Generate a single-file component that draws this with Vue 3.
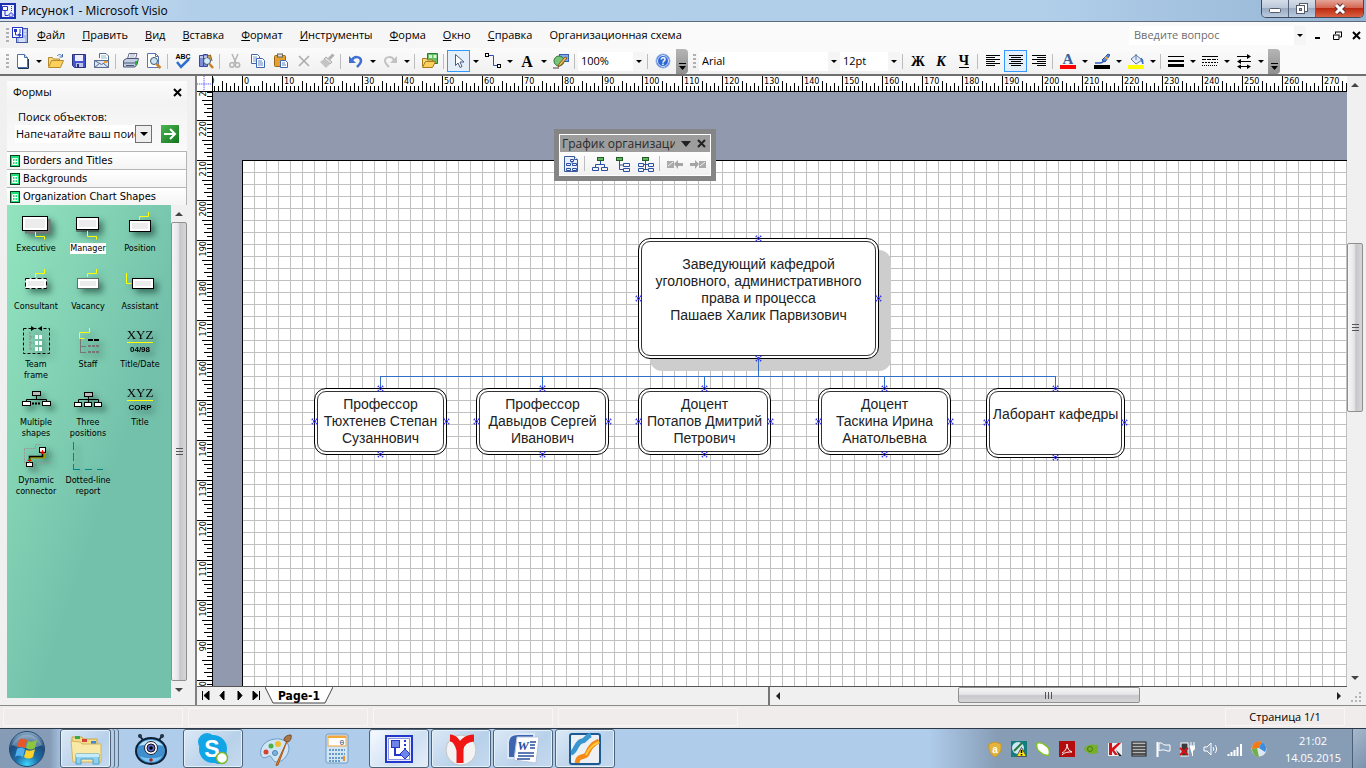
<template>
  <div class="app">
    <header class="titlebar">
      <svg class="ico16" viewBox="0 0 16 16" v-html="icons.visio"></svg>
      <h1 class="title">Рисунок1 - Microsoft Visio</h1>
      <div class="win-buttons">
        <button class="win" aria-label="Свернуть"><svg width="14" height="10" viewBox="0 0 14 10"><rect x="1.500" y="4.500" width="11" height="4" rx="1" fill="#fff" stroke="#555a6b" /></svg></button>
        <button class="win" aria-label="Восстановить"><svg width="14" height="13" viewBox="0 0 14 13"><rect x="4.500" y="1.500" width="8" height="8" fill="#fff" stroke="#555a6b" /><rect x="1.500" y="3.500" width="8" height="8" fill="#fff" stroke="#555a6b" /><rect x="4.500" y="6.500" width="2" height="2" fill="#9bb" stroke="#555a6b" /></svg></button>
        <button class="win close" aria-label="Закрыть"><svg width="14" height="12" viewBox="0 0 14 12"><path d="M3 2l8 8M11 2l-8 8" stroke="#59303a" stroke-width="5" /><path d="M3 2l8 8M11 2l-8 8" stroke="#fff" stroke-width="3" /></svg></button>
      </div>
    </header>

    <nav class="menubar">
      <span class="grip"></span>
      <svg class="doc-icon" viewBox="0 0 18 18" v-html="icons.docVisio"></svg>
      <a v-for="m in menus" :key="m" href="#" class="menu"><u v-if="m !== menus[menus.length - 1]">{{ m[0] }}</u><template v-else>{{ m[0] }}</template>{{ m.slice(1) }}</a>
      <div class="ask">
        <input type="text" aria-label="Введите вопрос" placeholder="Введите вопрос" />
        <button class="drop" aria-label="Список вопросов"><i class="tri"></i></button>
      </div>
      <button class="mdi" aria-label="Свернуть документ"><svg width="9" height="9"><path d="M1 7h5" stroke="#000" stroke-width="2" /></svg></button>
      <button class="mdi" aria-label="Восстановить документ"><svg width="9" height="9"><path d="M2 1h7M2.500 1v2M8.500 1v5H6.500M0 4h6.500M.5 4v4.500h5.500V4" stroke="#000" fill="none" /></svg></button>
      <button class="mdi" aria-label="Закрыть документ"><svg width="9" height="9"><path d="M1 1l7 7M8 1L1 8" stroke="#000" stroke-width="2" /></svg></button>
    </nav>

    <div class="toolbars">
      <div v-for="(bar, b) in toolbars" :key="b" class="toolbar">
        <span class="grip"></span>
        <template v-for="(t, i) in bar" :key="i">
          <span v-if="t === '|'" class="sep"></span>
          <button v-else-if="t === 'v'" class="arrow" aria-label="Ещё"><i class="tri"></i></button>
          <div v-else-if="t.select" class="combo" :class="t.cls">
            <select :aria-label="t.label"><option>{{ t.select }}</option></select>
            <span class="drop"><i class="tri"></i></span>
          </div>
          <button v-else class="tool" :class="{ on: t[0] === '*' }" :aria-label="t.replace('*', '')">
            <svg class="ico16" viewBox="0 0 16 16" v-html="icons[t.replace('*', '')]"></svg>
          </button>
        </template>
        <button class="overflow" aria-label="Параметры панели"><svg width="9" height="9"><path d="M1 1.500h7" stroke="#000" /><path d="M1 4h7L4.500 8z" /></svg></button>
      </div>
    </div>

    <main class="work">
      <aside class="shapes">
        <div class="pane-head">
          <span>Формы</span>
          <button aria-label="Закрыть панель"><svg width="9" height="9"><path d="M1 1l7 7M8 1L1 8" stroke="#000" stroke-width="2" /></svg></button>
        </div>
        <div class="search">
          <label for="find">Поиск объектов:</label>
          <div class="find-row">
            <input id="find" type="text" value="Напечатайте ваш поиск" />
            <button class="find-drop" aria-label="Список"><i class="tri big"></i></button>
            <button class="go" aria-label="Найти"><svg width="14" height="14"><path d="M1 7h11M7 2l5 5-5 5" fill="none" stroke="#fff" stroke-width="2" /></svg></button>
          </div>
        </div>
        <button v-for="s in stencils" :key="s" class="stencil">
          <svg width="11" height="12" viewBox="0 0 11 12"><rect x=".5" y=".5" width="9" height="11" fill="#1fe07a" stroke="#06401c" /><path d="M2.500 3.500h5v6h-5zM5 4v5M3 6.500h4" fill="none" stroke="#fff" /></svg>
          {{ s }}
        </button>
        <div class="stencil-body">
          <div class="masters">
            <div v-for="m in masters" :key="m.name" class="master" :class="{ sel: m.name === 'Manager' }">
              <svg width="52" height="33" viewBox="0 0 52 33" v-html="m.art"></svg>
              <span>{{ m.name }}</span>
            </div>
          </div>
          <div class="vscroll side">
            <button aria-label="Вверх"><i class="sa up"></i></button>
            <div class="thumb"><i></i></div>
            <button aria-label="Вниз"><i class="sa down"></i></button>
          </div>
        </div>
      </aside>

      <section class="drawing">
        <div class="draw-grid">
          <svg class="corner" viewBox="0 0 16 16"><path d="M7.500 0v16M0 8.500h16" stroke="#22f" stroke-dasharray="1 1" /></svg>
          <svg class="ruler-h">
            <path :d="hTicks" stroke="#000" />
            <text v-for="n in hCount" :key="n" :x="(n - 1) * 40 - 9" y="8">{{ Math.abs(n - 2) * 10 }}</text>
          </svg>
          <svg class="ruler-v">
            <path :d="vTicks" stroke="#000" />
            <text v-for="n in vCount" :key="n" text-anchor="end" :transform="`translate(9 ${(n - 1) * 40 - 11}) rotate(-90)`">{{ Math.abs(24 - n) * 10 }}</text>
          </svg>
          <div class="canvas">
            <div class="page">
              <svg class="links"><path :d="links" /></svg>
              <div
                v-for="n in nodes"
                :key="n.x + '-' + n.y"
                class="node"
                :class="{ boss: n.boss }"
                :style="{ left: n.x + 'px', top: n.y + 'px', width: n.w + 'px', height: n.h + 'px' }"
              >
                <span v-for="(l, i) in n.lines" :key="i">{{ l }}</span>
                <svg v-for="s in ['t', 'r', 'b', 'l']" :key="s" class="pin" :class="s" viewBox="0 0 7 7"><path d="M1 1l5 5M6 1L1 6" /></svg>
              </div>
            </div>
            <div class="float">
              <div class="float-head">
                <span>График организации</span>
                <button aria-label="Меню панели"><svg width="10" height="6"><path d="M0 0h10L5 6z" fill="#222" /></svg></button>
                <button aria-label="Закрыть"><svg width="9" height="9"><path d="M1 1l7 7M8 1L1 8" stroke="#222" stroke-width="2" /></svg></button>
              </div>
              <div class="float-body">
                <template v-for="(t, i) in floatTools" :key="i">
                  <span v-if="t === '|'" class="sep"></span>
                  <button v-else class="tool" :aria-label="t"><svg class="ico16" viewBox="0 0 16 16" v-html="icons[t]"></svg></button>
                </template>
              </div>
            </div>
          </div>
        </div>
        <div class="vscroll main">
          <button aria-label="Вверх"><i class="sa up"></i></button>
          <div class="sp before"></div>
          <div class="thumb"><i></i></div>
          <div class="sp after"></div>
          <button aria-label="Вниз"><i class="sa down"></i></button>
        </div>
        <div class="bottom">
          <div class="pages">
            <button v-for="(p, i) in navs" :key="i" class="nav" :aria-label="'Страница ' + i"><svg width="9" height="9"><path :d="p" stroke="#000" /></svg></button>
            <button class="tab">
              <svg width="68" height="17"><path d="M0 0l8 16h52l8-16" fill="#fff" stroke="#444" /></svg>
              <b>Page-1</b>
            </button>
          </div>
          <div class="hscroll">
            <button aria-label="Влево"><i class="sa left"></i></button>
            <div class="sp before"></div>
            <div class="thumb"><i></i></div>
            <div class="sp after"></div>
            <button aria-label="Вправо"><i class="sa right"></i></button>
          </div>
        </div>
        <svg class="resize" viewBox="0 0 17 18"><path d="M12 6h2M12 10h2M8 10h2M12 14h2M8 14h2M4 14h2" stroke="#b5b5b5" stroke-width="2" /></svg>
      </section>
    </main>

    <footer class="status">
      <span v-for="n in 4" :key="n" class="cell"></span>
      <span class="cell last">Страница 1/1</span>
    </footer>

    <div class="taskbar">
      <button class="start" aria-label="Пуск"><svg width="38" height="38" viewBox="0 0 38 38" v-html="icons.start"></svg></button>
      <button v-for="t in tasks" :key="t.icon" class="task" :class="t.cls" :aria-label="t.icon">
        <svg width="34" height="34" viewBox="0 0 34 34" v-html="icons[t.icon]"></svg>
      </button>
      <div class="tray">
        <svg v-for="t in tray" :key="t" class="ico16" viewBox="0 0 16 16" v-html="icons[t]"></svg>
        <time class="clock"><span>21:02</span><span>14.05.2015</span></time>
        <button class="peek" aria-label="Показать рабочий стол"></button>
      </div>
    </div>
  </div>
</template>

<script setup>
import { onMounted, onUnmounted, ref } from 'vue'

const menus = ['Файл', 'Править', 'Вид', 'Вставка', 'Формат', 'Инструменты', 'Форма', 'Окно', 'Справка', 'Организационная схема']
const stencils = ['Borders and Titles', 'Backgrounds', 'Organization Chart Shapes']

const toolbars = [
  [
    'new', 'v', 'open', 'save', 'mail', '|', 'print', 'preview', '|', 'spell', 'research', '|',
    'cut', 'copy', 'paste', 'delete', 'brush', '|', 'undo', 'v', 'redo', 'v', '|', 'stencils', '|',
    '*pointer', 'v', 'connector', 'v', 'text', 'v', 'draw', '|',
    { select: '100%', label: 'Масштаб', cls: 'zoom' }, '|', 'help'
  ],
  [
    { select: 'Arial', label: 'Шрифт', cls: 'font' }, { select: '12pt', label: 'Размер шрифта', cls: 'size' }, '|',
    'bold', 'italic', 'underline', '|', 'left', '*center', 'right', '|',
    'color', 'v', 'line', 'v', 'fill', 'v', '|', 'weight', 'v', 'pattern', 'v', 'ends', 'v'
  ]
]
const floatTools = ['layout', '|', 'horiz', 'vert', 'side', '|', 'moveLeft', 'moveRight']

const navs = [
  'M1.500 0v9M8 0L3 4.500 8 9z',
  'M6 0L2 4.500 6 9z',
  'M3 0l4 4.500L3 9z',
  'M7.500 0v9M1 0l5 4.500L1 9z'
]

const tasks = [
  { icon: 'explorer', cls: 'open stack' },
  { icon: 'cyclops', cls: 'plain' },
  { icon: 'skype', cls: 'open' },
  { icon: 'paint', cls: 'plain' },
  { icon: 'calc', cls: 'plain' },
  { icon: 'visioBig', cls: 'open active' },
  { icon: 'yandex', cls: 'open' },
  { icon: 'word', cls: 'open' },
  { icon: 'foxit', cls: 'open' }
]
const tray = ['shield', 'disc', 'leaf', 'adobe', 'nvidia', 'kaspersky', 'chip', 'flag', 'power', 'sound', 'signal', 'globe']

/* ---------- rulers ---------- */
function tick(i) {
  if (i % 10 === 0) return 16
  if (i % 10 === 5) return 10
  if (i % 10 < 5) return 5
  return i % 2 ? 5 : 8
}
let hTicks = ''
let vTicks = ''
for (let i = 0; i < 600; i++) {
  const p = i * 4 - 10.5
  hTicks += `M${p} 15v-${tick(i)}`
  vTicks += `M15 ${p - 1}h-${tick(i)}`
}

// only as many labels as the window has room for
const hCount = ref(0)
const vCount = ref(0)
function fitRulers() {
  hCount.value = Math.ceil((window.innerWidth - 242) / 40)
  vCount.value = Math.ceil((window.innerHeight - 152) / 40)
}
fitRulers()
onMounted(() => window.addEventListener('resize', fitRulers))
onUnmounted(() => window.removeEventListener('resize', fitRulers))

/* ---------- diagram ---------- */
const nodes = [
  { boss: true, x: 395, y: 77, w: 241, h: 121, lines: ['Заведующий кафедрой', 'уголовного, административного', 'права и процесса', 'Пашаев Халик Парвизович', ''] },
  { x: 71, y: 227, w: 133, h: 67, lines: ['Профессор', 'Тюхтенев Степан', 'Сузаннович'] },
  { x: 233, y: 227, w: 133, h: 67, lines: ['Профессор', 'Давыдов Сергей', 'Иванович'] },
  { x: 395, y: 227, w: 133, h: 67, lines: ['Доцент', 'Потапов Дмитрий', 'Петрович'] },
  { x: 575, y: 227, w: 133, h: 67, lines: ['Доцент', 'Таскина Ирина', 'Анатольевна'] },
  { x: 743, y: 227, w: 139, h: 70, lines: ['Лаборант кафедры', ''] }
]
const links = 'M515.500 197v18M137 215.500h676' + [137, 299, 461, 641, 812].map((x) => `M${x + 0.5} 215v12`).join('')

/* ---------- stencil masters ---------- */
const box = (x, y, w, h, extra = '') => `<rect x="${x + 0.5}" y="${y + 0.5}" width="${w}" height="${h}" fill="#fff" stroke="#000" ${extra}/><rect x="${x + 3}" y="${y + 3}" width="${w - 5}" height="${h - 5}" fill="#ececec"/>`
const yel = (d) => `<path d="${d}" fill="none" stroke="#ff0"/>`
const small = (x, y, f = '#fff') => `<rect x="${x + 0.5}" y="${y + 0.5}" width="8" height="4" fill="${f}" stroke="#000"/>`
const xyz = (sub) => `<text x="26" y="13" text-anchor="middle" font-family="Liberation Serif, serif" font-size="13">XYZ</text><path d="M13 16.500h26" stroke="#ff0"/><text x="26" y="26" text-anchor="middle" font-family="Liberation Sans, sans-serif" font-weight="bold" font-size="8">${sub}</text>`
const masters = [
  { name: 'Executive', art: '<path d="M15 22h24V9" fill="none" stroke="#777" stroke-width="3"/>' + box(12, 6, 25, 14) + yel('M25.500 22v4.500h9v3') },
  { name: 'Manager', art: '<path d="M14 21h23" stroke="#333"/>' + box(14, 7, 22, 12) + yel('M25.500 21v5.500h9v3') },
  { name: 'Position', art: box(15, 10, 21, 11) + yel('M25.500 10V6.500h9V2') },
  { name: 'Consultant', art: box(15, 10, 21, 10, 'stroke-dasharray="4 2"') + yel('M25.500 9V5.500h9V1') },
  { name: 'Vacancy', art: box(15, 10, 21, 10, 'stroke-dasharray="1 1"') + yel('M25.500 9V5.500h9V1') },
  { name: 'Assistant', art: box(18, 10, 21, 10) + yel('M12.500 5v10.500h5') },
  { name: 'Team\nframe', art: '<rect x="13.500" y="2.500" width="26" height="25" fill="none" stroke="#000" stroke-dasharray="3 2"/><path d="M21 0v5l4-2.500zM32 0v5l-4-2.500z"/><path d="M20 6v17M20 11h4M20 17h4M20 23h4" fill="none" stroke="#888" stroke-dasharray="2 1"/><path d="M25 11h7M25 17h7M25 23h7" stroke="#fff" stroke-width="4" stroke-dasharray="3 1"/>' },
  { name: 'Staff', art: '<path d="M18.500 13v14M18 20.500h6M18 26.500h6" fill="none" stroke="#777"/><path d="M26 20h12M26 26h12" stroke="#777" stroke-width="2" stroke-dasharray="3 1"/><path d="M26 14h12" stroke="#000" stroke-width="2" stroke-dasharray="5 1"/>' + yel('M27.500 2v4.500h-10v6h5') },
  { name: 'Title/Date', art: xyz('04/98') },
  { name: 'Multiple\nshapes', art: '<path d="M26.500 12v4M16.500 19v-3.500h20V19" fill="none" stroke="#000"/><path d="M22 19.500h9" stroke="#000" stroke-width="2" stroke-dasharray="2 1"/>' + small(22, 7, '#bbb') + small(12, 17) + small(32, 17) },
  { name: 'Three\npositions', art: '<path d="M26.500 12v6M16.500 19v-3.500h20V19" fill="none" stroke="#000"/>' + small(22, 8, '#bbb') + '<rect x="12.500" y="18.500" width="7" height="4" fill="#fff" stroke="#000"/><rect x="22.500" y="18.500" width="7" height="4" fill="#fff" stroke="#000"/><rect x="32.500" y="18.500" width="7" height="4" fill="#fff" stroke="#000"/>' },
  { name: 'Title', art: xyz('CORP') },
  { name: 'Dynamic\nconnector', art: '<path d="M14.500 6.500h11v-4h6M39.500 6v15h-12v6h-7M14.500 7v14" fill="none" stroke="#999" stroke-dasharray="2 1"/><path d="M20 20v-4.500h14V10" fill="none" stroke="#990" stroke-width="2"/><path d="M19.500 18v-3.500h13V10" fill="none" stroke="#000" stroke-width="1.500"/><rect x="29.500" y="5.500" width="6" height="5" fill="#fff" stroke="#000"/><rect x="16.500" y="20.500" width="6" height="4" fill="#fff" stroke="#000"/><path d="M32.500 8v4M30.500 10h4M19.500 16v5M17.500 18.500h4" stroke="red"/>' },
  { name: 'Dotted-line\nreport', art: '<path d="M11.500 0v28" stroke="#088" stroke-dasharray="8 3"/><path d="M11 27.500h30" stroke="#088" stroke-dasharray="7 5"/>' }
]

/* ---------- icons ---------- */
const vbox = '<path d="M2.500 3.500h5v4h-5z" fill="#fff" stroke="#2338c8"/><path d="M5 8v4.500h3" fill="none" stroke="#2338c8"/><path d="M11 9.500l2.500 2.500-2.500 2.500L8.500 12z" fill="#cfd8ff" stroke="#2338c8"/><path d="M11.500 3v5" stroke="#2338c8" stroke-dasharray="1 1"/>'
const tree = (d) => `<path d="${d}" fill="none" stroke="#2c4fa3"/>`
const al = (rows) => rows.map(([x, w], i) => `<path d="M${x} ${2.5 + i * 2}h${w}" stroke="#000"/>`).join('')
const letter = (c, extra = '') => `<text x="8" y="13" text-anchor="middle" font-family="Liberation Serif, serif" font-weight="bold" font-size="14" ${extra}>${c}</text>`

const icons = {
  visio: '<rect x="1" y="1" width="14" height="14" fill="#eef1ff" stroke="#1c2fae" stroke-width="2"/>' + vbox,
  docVisio: '<rect x="5.500" y="2.500" width="11" height="14" fill="#a9bce8" stroke="#3f55a5"/><path d="M8 13h6M8 15h6M13 5h2M13 8h2" stroke="#fff"/><rect x="1.500" y="1.500" width="10" height="10" fill="#fff" stroke="#2338c8"/><path d="M3 3h3v3H3z" fill="#2338c8"/><path d="M4.500 6v3H7M9 3v4" fill="none" stroke="#2338c8"/><path d="M8.500 7l2 2-2 2-2-2z" fill="#2338c8"/>',
  new: '<path d="M3.500 1.500h7l3 3v10h-10z" fill="#fff" stroke="#4a6fb0"/><path d="M10.500 1.500v3h3" fill="#d5e0f5" stroke="#4a6fb0"/><path d="M4 15.500h10.500V6" fill="none" stroke="#24344f"/>',
  open: '<path d="M.5 13.500v-9h4l1 1.500h6v2" fill="#f8d980" stroke="#b68a2a"/><path d="M.5 14.500l3-7h12l-3 7z" fill="#fbd05c" stroke="#b68a2a"/><path d="M9 3c2-2 4-2 5 .5M14.500 1v3h-3" fill="none" stroke="#456fb0"/>',
  save: '<path d="M1.500 1.500h13v13h-11l-2-2z" fill="#4455d0" stroke="#28337f"/><rect x="4" y="2" width="8" height="6" fill="#eef"/><rect x="5" y="10" width="7" height="4" fill="#bcc4e8"/><rect x="6" y="11" width="2" height="3" fill="#28337f"/>',
  mail: '<path d="M5.500 5V.5H12l2.500 2.500V9" fill="#fff" stroke="#5a6a90"/><path d="M7 3h5M7 5h6" stroke="#8bc"/><path d="M.5 7.500h14v7H.5z" fill="#dbe5f5" stroke="#5a6a90"/><path d="M.5 7.500l7 4 7-4M.5 14.500l5-4M14.500 14.500l-5-4" fill="none" stroke="#5a6a90"/><rect x="10" y="8" width="3" height="2" fill="#e5a13a"/>',
  print: '<path d="M4.500 6L6 .5h8L12.500 6z" fill="#fff" stroke="#668"/><path d="M7 2h5M6.500 4h5" stroke="#9ab"/><path d="M.5 7.500l3-2h12l-1.500 6-2 2.500H.5z" fill="#c2cde2" stroke="#4a5878"/><path d="M1 10h12M3 12.500h8" stroke="#4a5878"/><path d="M12 8h2v4h-2z" fill="#2cb233"/>',
  preview: '<path d="M1.500.5h8l3 3v11h-11z" fill="#fff" stroke="#5b76ae"/><path d="M9.500.5v3h3" fill="none" stroke="#5b76ae"/><circle cx="8" cy="8" r="3.500" fill="#c7e5f7" stroke="#456"/><path d="M10.500 11l4 4" stroke="#c8812b" stroke-width="2.500"/>',
  spell: '<text x="8" y="5.500" text-anchor="middle" font-family="Liberation Sans, sans-serif" font-weight="bold" font-size="7">ABC</text><path d="M2 9l4 5 8-8" fill="none" stroke="#2f6fd0" stroke-width="2.500"/>',
  research: '<path d="M1.500 2.500h4v11h-4zM5.500 1.500h4v12h-4z" fill="#7a8edb" stroke="#3a4a99"/><path d="M9.500 3l3-1 1.500 6" fill="#d9a13a" stroke="#8a601b"/><circle cx="9" cy="8" r="3.500" fill="#d4ecfa" stroke="#456"/><path d="M11.500 11l3.500 4" stroke="#c8812b" stroke-width="2.500"/><path d="M2 4h3M6 4h3" stroke="#fff"/>',
  cut: '<path d="M5 1l4 9M11 1L7 10" stroke="#b5b5b5" stroke-width="1.500"/><circle cx="5" cy="12" r="2.200" fill="none" stroke="#b5b5b5" stroke-width="1.500"/><circle cx="10.500" cy="12" r="2.200" fill="none" stroke="#b5b5b5" stroke-width="1.500"/>',
  copy: '<path d="M1.500 1.500h6l2 2v7h-8z" fill="#fff" stroke="#3e66b5"/><path d="M3 4h4M3 6h5M3 8h5" stroke="#7c9bd5"/><path d="M6.500 5.500h6l2 2v7h-8z" fill="#fff" stroke="#3e66b5"/><path d="M8 8h4M8 10h5M8 12h5" stroke="#5c82c9"/>',
  paste: '<rect x="1.500" y="2.500" width="11" height="11" rx="1" fill="#e5a030" stroke="#99651a"/><rect x="4.500" y="1" width="5" height="3" fill="#ddd" stroke="#665"/><path d="M7.500 7.500h5l2 2v5h-7z" fill="#fff" stroke="#3e66b5"/><path d="M9 10h3M9 12h4" stroke="#5c82c9"/>',
  delete: '<path d="M3 3l10 10M13 3L3 13" stroke="#a9a9a9" stroke-width="1.500"/>',
  brush: '<path d="M14.500 1.500L10 6" stroke="#b0b0b0" stroke-width="3"/><path d="M7 4l6 5-2 2-6-5z" fill="#ddd" stroke="#aaa"/><path d="M5 6l6 5-4 4-6-6z" fill="#c4c4c4"/>',
  undo: '<path d="M4 7c2-4 9-4 9 1 0 2-2 4-4 6" fill="none" stroke="#3f6fd0" stroke-width="2.500"/><path d="M1 3v7h7z" fill="#3f6fd0"/>',
  redo: '<path d="M12 7C10 3 3 3 3 8c0 2 2 4 4 6" fill="none" stroke="#c2c2c2" stroke-width="2"/><path d="M15 3v7H8z" fill="#c2c2c2"/>',
  stencils: '<path d="M5.500.5h10v10h-10z" fill="#63c063" stroke="#2a7a35"/><path d="M7 2h3v3H7zM11.500 2h3v3h-3z" fill="#d9f5d9"/><path d="M.5 13.500v-8h4l1 1.500h5v2" fill="#f8d980" stroke="#a87a20"/><path d="M.5 14.500l3-6h10l-3 6z" fill="#fbd05c" stroke="#a87a20"/>',
  pointer: '<path d="M4.500 1.500v11l2.500-2.500 2 4.500 2-1-2-4.500h4z" fill="#fff" stroke="#4a5a80"/>',
  connector: '<path d="M3 2.500h5.500v10H13" fill="none" stroke="#2250c0"/><rect x=".5" y=".5" width="3" height="3" fill="#fff" stroke="#000"/><rect x="12.500" y="11.500" width="3" height="3" fill="#fff" stroke="#000"/>',
  text: '<text x="8" y="14" text-anchor="middle" font-family="Liberation Serif, serif" font-weight="bold" font-size="16">A</text>',
  draw: '<rect x="6.500" y="1.500" width="9" height="7" fill="#7fa9ea" stroke="#3360b0"/><circle cx="6" cy="8" r="5" fill="#79c379" stroke="#2a7a35"/><path d="M14 5l-6 7-3 2 1-3 6-7z" fill="#f3c35a" stroke="#8a5a1a"/><path d="M0 15h6" stroke="#444"/>',
  help: '<circle cx="8" cy="8" r="7" fill="#2f66d0" stroke="#9ab8ee"/><circle cx="8" cy="8" r="5.500" fill="none" stroke="#dce8ff"/><text x="8" y="12" text-anchor="middle" font-family="Liberation Sans, sans-serif" font-weight="bold" font-size="10" fill="#fff">?</text>',
  bold: letter('Ж'),
  italic: letter('К', 'font-style="italic"'),
  underline: letter('Ч').replace('y="13"', 'y="12"') + '<path d="M3 14.500h10" stroke="#000"/>',
  left: al([[1, 14], [1, 9], [1, 14], [1, 9], [1, 14], [1, 9]]),
  center: al([[1, 14], [3, 10], [1, 14], [3, 10], [1, 14], [3, 10]]),
  right: al([[1, 14], [6, 9], [1, 14], [6, 9], [1, 14], [6, 9]]),
  color: '<text x="8" y="11" text-anchor="middle" font-family="Liberation Serif, serif" font-weight="bold" font-size="15" fill="#3a5fa0">A</text><path d="M0 14h16" stroke="red" stroke-width="4"/>',
  line: '<path d="M1 10h5c2 0 3-1 4-2" fill="none" stroke="#2a5cba" stroke-width="1.500"/><path d="M14 1l2 1-5 7-3-2z" fill="#5a8ae0" stroke="#2a4c9a"/><path d="M11 4l3 2" stroke="#f0b040" stroke-width="2"/><path d="M0 14h16" stroke="#000" stroke-width="4"/>',
  fill: '<path d="M3 6l5-4 6 5-6 4z" fill="#dfe9f8" stroke="#5a78a8"/><path d="M8 7V1" stroke="#5a78a8"/><path d="M13 5c2 1 2 3 2 6-1-2-2-3-2-6z" fill="#3a70d0" stroke="#3a70d0"/><path d="M0 14h16" stroke="#ff0" stroke-width="4"/>',
  weight: '<path d="M0 3.500h16" stroke="#000"/><path d="M0 8h16" stroke="#000" stroke-width="2"/><path d="M0 12.500h16" stroke="#000" stroke-width="3"/>',
  pattern: '<path d="M0 3.500h16" stroke="#000"/><path d="M0 6.500h16" stroke="#000" stroke-dasharray="4 1"/><path d="M0 9.500h16" stroke="#000" stroke-dasharray="2 1"/><path d="M0 12.500h16" stroke="#000" stroke-dasharray="1 1"/>',
  ends: '<path d="M1 3.500h13M2 8.500h13M2 13.500h12" stroke="#000"/><path d="M11 1l4 2.500L11 6zM5 6L1 8.500 5 11zM5 11.500l-4 2 4 2.500zM11 11.500l4 2-4 2.500z"/>',
  layout: '<path d="M1.500.5h10l3 3v12h-13z" fill="#e8eefb" stroke="#3a5a9a"/><path d="M11.500.5v3h3" fill="#fff" stroke="#3a5a9a"/>' + tree('M7.500 3.500h3v2h-3zM3.500 7.500h4v2h-4zM9.500 7.500h4v2h-4zM9 5.500v2M3.500 12.500h4v2h-4zM9.500 12.500h4v2h-4z'),
  horiz: tree('M8.500 5v4M3.500 11V8.500h9V11M.5 11.500h6v3h-6zM9.500 11.500h6v3h-6z') + '<rect x="5.500" y="1.500" width="6" height="3" fill="#5fb85f" stroke="#1f5c28"/>',
  vert: tree('M4.500 5v8.500H8M4.500 9H8M8.500 7.500h6v3h-6zM8.500 12.500h6v3h-6z') + '<rect x="1.500" y="1.500" width="6" height="3" fill="#5fb85f" stroke="#1f5c28"/>',
  side: tree('M7.500 5v9M6 8.500h4M6 13.500h4M.5 7.500h5v3h-5zM10.500 7.500h5v3h-5zM.5 12.500h5v3h-5zM10.500 12.500h5v3h-5z') + '<rect x="4.500" y="1.500" width="6" height="3" fill="#5fb85f" stroke="#1f5c28"/>',
  moveLeft: '<path d="M0 5h7v7H0z" fill="#aaa"/><path d="M1 10l5-4" stroke="#eee"/><path d="M7 8l4-4v3h5v3h-5v3z" fill="#a5a5a5"/>',
  moveRight: '<path d="M9 5h7v7H9z" fill="#aaa"/><path d="M10 10l5-4" stroke="#eee"/><path d="M9 8L5 4v3H0v3h5v3z" fill="#a5a5a5"/>',

  start: '<defs><radialGradient id="orb" cx=".5" cy=".95" r=".95"><stop offset="0" stop-color="#3fd8ff"/><stop offset=".35" stop-color="#1c6ea8"/><stop offset=".7" stop-color="#1d4c7c"/><stop offset="1" stop-color="#8fb0cc"/></radialGradient></defs><circle cx="19" cy="19" r="17.500" fill="url(#orb)" stroke="#27486c"/><path d="M4 15a16 16 0 0130 0c-8 4-20 4-30 0z" fill="#fff" opacity=".3"/><path d="M11 10c3-2 5-1 8 0l-2 8c-3-1-5-2-8 0z" fill="#e8572a"/><path d="M20 11c3 1 5 1 9-1l-2 8c-3 2-6 2-9 0z" fill="#8cc63e"/><path d="M9 19c3-2 5-1 8 0l-2 8c-3-1-5-2-8 0z" fill="#4fb0ec"/><path d="M18 20c3 1 6 1 9-1l-2 8c-3 2-6 2-9 0z" fill="#fcd12a"/>',
  explorer: '<path d="M3 5h10l1 2h14v6H3z" fill="#f3dc8c" stroke="#c9a748"/><path d="M6 4h5v3H6z" fill="#3aa84b"/><path d="M13 7h5v3h-5z" fill="#d6453a"/><path d="M22 9h5v3h-5z" fill="#3a8ad6"/><path d="M2 9l9 1 2 2h19v18H4z" fill="#f8e9a8" stroke="#d4b55c"/><path d="M7 22h23v10h-6v-5H12v5H7z" fill="#8fd0f0" stroke="#4a9cc8"/><path d="M7 22h23v3H7z" fill="#c5ecfb"/>',
  cyclops: '<path d="M9 8L5 3M25 8l4-5" stroke="#123" stroke-width="2"/><circle cx="6" cy="4" r="2" fill="#234"/><circle cx="28" cy="4" r="2" fill="#234"/><ellipse cx="17" cy="19" rx="15" ry="13" fill="#3f8fce" stroke="#0f2135" stroke-width="2"/><path d="M5 14c5-8 19-8 24 0-5-2-19-2-24 0z" fill="#b8e0f8"/><path d="M6 24c4 8 18 8 22 0-5 3-17 3-22 0z" fill="#7cc4f0"/><circle cx="17" cy="16" r="6.500" fill="#fff" stroke="#223"/><circle cx="17" cy="16" r="4" fill="#5a6ac0" stroke="#112"/><circle cx="17" cy="16" r="1.800" fill="#000"/><circle cx="17" cy="28" r="1.800" fill="#a22"/>',
  skype: '<circle cx="11" cy="10" r="9" fill="#13a6e4"/><circle cx="23" cy="24" r="8" fill="#0c96d8"/><circle cx="17" cy="17" r="14" fill="#12a5e6"/><text x="16" y="25" text-anchor="middle" font-family="Liberation Sans, sans-serif" font-weight="bold" font-size="23" fill="#fff">S</text><circle cx="26" cy="26" r="5.500" fill="#fff" stroke="#7cb82f" stroke-width="1.500"/>',
  paint: '<path d="M17 7C6 8 1 17 3 23c2 5 6 2 8 1 3-1 3 5 7 6 6 1 13-7 13-14 0-6-7-10-14-9z" fill="#cfe4f5" stroke="#6a9cc4"/><circle cx="8" cy="20" r="2.500" fill="#d8402f"/><circle cx="13" cy="14" r="2.500" fill="#4fae45"/><circle cx="20" cy="12" r="3" fill="#f0c02c"/><circle cx="17" cy="21" r="2.500" fill="#7fb4dc" stroke="#4a86b4"/><path d="M29 9L20 33l-2 .5 1-3z" fill="#e8862a" stroke="#a8571a"/><path d="M26 8c0-3 3-5 7-5 1 3-1 7-4 7z" fill="#a9764a" stroke="#7a4a25"/>',
  calc: '<rect x="6" y="2" width="22" height="29" rx="2" fill="#d3e6f6" stroke="#6f9cc4"/><rect x="8" y="4" width="18" height="10" fill="#fff" stroke="#f0a040"/><path d="M8 5h18" stroke="#f5a83a" stroke-width="2"/><text x="22" y="13" text-anchor="middle" font-family="Liberation Mono, monospace" font-size="8" fill="#345">0</text><path d="M9 18h16M9 22h16M9 26h16M9 29h12" stroke="#6a9ac4" stroke-width="2" stroke-dasharray="2 1"/><path d="M24 24v5" stroke="#f0902a" stroke-width="2"/>',
  visioBig: '<rect x="4" y="4" width="26" height="26" fill="#e4e9ff" stroke="#2338c8" stroke-width="2"/><rect x="6.500" y="6.500" width="21" height="21" fill="#fff" stroke="#8a96e0"/><rect x="9.500" y="8.500" width="8" height="7" fill="#6f84e8" stroke="#2338c8"/><path d="M13 16v7h7" fill="none" stroke="#2338c8" stroke-width="2"/><path d="M23 17l5 5-5 5-5-5z" fill="#6f84e8" stroke="#2338c8"/><path d="M23 8v9" stroke="#2338c8" stroke-width="2" stroke-dasharray="2 2"/>',
  yandex: '<circle cx="17" cy="18" r="15" fill="#f3f3f3" stroke="#c4c4c4"/><path d="M6 6c5 0 8 5 10 12M30 6c-7 0-14 5-14 12v13" fill="none" stroke="#f01616" stroke-width="7" stroke-linejoin="round"/>',
  word: '<path d="M2 12C2 4 6 2 12 2h16v24H2z" fill="#3d64ae" stroke="#dbe6f7" stroke-width="2"/><path d="M11 5h22l-3 26-22-3z" fill="#fff" stroke="#b9c6de"/><text x="17" y="18" text-anchor="middle" font-family="Liberation Serif, serif" font-weight="bold" font-style="italic" font-size="13" fill="#2a4f9c">W</text><path d="M24 10h6M24 13h5M24 16h5M12 21h16M12 24h16M11 27h13" stroke="#2a4f9c" stroke-width="1.500"/>',
  foxit: '<rect x="2" y="2" width="30" height="30" rx="2" fill="#eef1f4" stroke="#1d5a95" stroke-width="2"/><path d="M3 21C8 20 8 10 14 9c4 0 4-5 9-6" fill="none" stroke="#3a96d0" stroke-width="5"/><path d="M9 31c1-9 7-4 10-9 2-4 3-9 12-13" fill="none" stroke="#f58a1a" stroke-width="5"/><path d="M18 23c2-4 4-9 13-13" fill="none" stroke="#ffc93a" stroke-width="2"/>',

  shield: '<path d="M8 1l6 2c1 6-1 10-6 13C3 13 1 9 2 3z" fill="#e3b53a" stroke="#c9962a"/><text x="8" y="12" text-anchor="middle" font-family="Liberation Sans, sans-serif" font-weight="bold" font-size="10" fill="#fff">a</text>',
  disc: '<rect width="16" height="16" fill="#137f7c"/><circle cx="7" cy="7" r="6" fill="#cfe8f5"/><path d="M3 10l8-8" stroke="#2c7a3a" stroke-width="2"/><path d="M10.500 6.500l5 9H5.500z" fill="#ffe21a" stroke="#555"/><path d="M10.500 9v3M10.500 13v1.500" stroke="#000" stroke-width="1.500"/>',
  leaf: '<path d="M2 2c4-1 7 1 8 2 4 2 5 6 4 10-4 1-7-1-9-3C2 9 1 6 2 2z" fill="#fff" stroke="#80c02a" stroke-width="1.500"/>',
  adobe: '<rect width="16" height="16" fill="#b30d10"/><path d="M3 12c4-2 5-6 5-9 0 4 2 7 5 8-4 0-7 0-10 3" fill="none" stroke="#fff"/>',
  nvidia: '<path d="M1 8c3-5 8-5 14-4v8C9 14 4 13 1 8z" fill="#76b02a"/><circle cx="7" cy="8" r="2.500" fill="none" stroke="#4b7c12"/>',
  kaspersky: '<rect x="1" y="2" width="14" height="13" fill="#e9eceb"/><path d="M2 2h3v5l6-5h3L7 9l4 5H8L5 10v4H2z" fill="#d8101a"/><path d="M9 9l6 6h-3z" fill="#222"/>',
  chip: '<rect x="1" y="1" width="14" height="14" fill="#b5b5b5" stroke="#222"/><path d="M1 4h14M1 7h14M1 10h14M1 13h14" stroke="#333" stroke-width="1.500"/>',
  flag: '<path d="M2.500 1v15" stroke="#fff" stroke-width="2"/><path d="M4 2c3-1 4 2 6 2h5v6c-3 1-5-2-8-1l-3 .5z" fill="#8da3bc" stroke="#fff"/>',
  power: '<rect x="2" y="2" width="7" height="13" fill="#3a3a3a" stroke="#fff"/><path d="M12 1v4M15 1v4M10.500 5h5v3l-2 2v5" fill="#fff" stroke="#fff"/><path d="M1 7l8 7M9 7l-8 7" stroke="#e01010" stroke-width="2"/>',
  sound: '<path d="M1 6h3l4-4v12L4 10H1z" fill="#8da3bc" stroke="#fff"/><path d="M10 6c1 1 1 3 0 4M12 4c2 2 2 6 0 8" fill="none" stroke="#fff"/>',
  signal: '<path d="M1.500 13v2M4.500 11v4M7.500 9v6M10.500 6v9M14 3v12" stroke="#fff" stroke-width="2"/>',
  globe: '<circle cx="8" cy="8" r="7.500" fill="#dfe7ef"/><path d="M1 8a7 7 0 0110-7L8 7z" fill="#f07a1a"/><path d="M11 1a7 7 0 013 10L8 7z" fill="#3a8ee0"/><path d="M1 8l5-1 2 9C4 16 1 12 1 8z" fill="#6fb04a"/>'
}
</script>

<style>
body {
  margin: 0;
  overflow: hidden;
}
</style>

<style scoped>
.app {
  display: flex;
  flex-direction: column;
  height: 100vh;
  background: #f0f0f0;
  color: #000;
  font: 11px/16px "Open Sans", "Noto Sans", sans-serif;
  overflow: hidden;
}
button {
  padding: 0;
  margin: 0;
  border: 0;
  background: none;
  color: inherit;
  font: inherit;
  display: flex;
  align-items: center;
  justify-content: center;
}
input,
select {
  border: 0;
  margin: 0;
  padding: 0;
  outline: 0;
  border-radius: 0;
  background: #fff;
  color: inherit;
  font: inherit;
  min-width: 0;
  appearance: none;
}
svg {
  display: block;
  flex: none;
}
.ico16 {
  width: 16px;
  height: 16px;
}
.tri {
  border: 3px solid transparent;
  border-top-color: #000;
  border-bottom: 0;
}
.tri.big {
  border-width: 4px;
  border-bottom: 0;
}

/* title bar */
.titlebar {
  display: flex;
  align-items: center;
  height: 21px;
  border-bottom: 1px solid #5d6b7d;
  background: linear-gradient(90deg, #d6e5f4, #b2cfea 190px, #b2cfea 76%, #93b4d3);
  flex: none;
}
.title {
  margin: 0 auto 0 5px;
  font-size: 12px;
  font-weight: normal;
}
.win-buttons {
  display: flex;
  align-self: flex-start;
  margin-right: 2px;
  border: 1px solid #3f4a5c;
  border-top: 0;
  border-radius: 0 0 5px 5px;
  overflow: hidden;
}
.win {
  width: 27px;
  height: 17px;
  border-right: 1px solid #56637a;
  background: linear-gradient(#d5dde8, #b9c6d8 50%, #9aabc2 50%, #b9cbe0);
}
.win.close {
  width: 47px;
  border-right: 0;
  background: linear-gradient(#e5a497, #d3614b 50%, #bd2a12 50%, #d9613f);
}

/* menu */
.menubar {
  display: flex;
  align-items: center;
  height: 26px;
  background: linear-gradient(90deg, #f1f1f1, #fafafa 50%);
  flex: none;
}
.grip {
  width: 3px;
  height: 14px;
  margin: 0 2px 0 6px;
  background: repeating-linear-gradient(#b0b0b0 0 2px, transparent 2px 4px);
}
.doc-icon {
  width: 18px;
  height: 18px;
  margin-right: 8px;
}
.menu {
  margin-right: 17px;
  color: #000;
  text-decoration: none;
  white-space: nowrap;
}
.ask {
  display: flex;
  width: 177px;
  height: 19px;
  margin: 0 3px 0 auto;
}
.ask input {
  flex: 1;
  padding-left: 5px;
}
.ask input::placeholder {
  color: #6d6d6d;
  opacity: 1;
}
.drop {
  display: flex;
  align-items: center;
  justify-content: center;
  width: 12px;
  background: #f5f5f5;
}
.mdi {
  width: 19px;
  height: 16px;
}

/* toolbars */
.toolbars {
  display: flex;
  height: 26px;
  border-bottom: 2px solid #6f6f6f;
  background: linear-gradient(90deg, #f4f4f4, #fafafa 50%);
  flex: none;
}
.toolbar {
  display: flex;
  align-items: center;
  height: 26px;
  border-radius: 0 3px 3px 0;
  background: linear-gradient(#fbfbfb, #f0f0f0);
}
.toolbar .grip {
  margin: 0 1px 0 6px;
}
.toolbar + .toolbar .grip {
  margin-left: 5px;
  margin-right: 3px;
}
.tool {
  box-sizing: border-box;
  width: 23px;
  height: 22px;
}
.tool.on {
  border: 1px solid #3399ff;
  background: #e5eff9;
}
.arrow {
  width: 11px;
  height: 22px;
}
.sep {
  width: 1px;
  height: 15px;
  margin: 0 3px 0 2px;
  background: #bdbdbd;
}
.combo {
  display: flex;
  height: 19px;
}
.combo select {
  flex: 1;
  padding-left: 3px;
}
.combo.zoom {
  width: 67px;
}
.combo.font {
  width: 141px;
}
.combo.size {
  width: 60px;
}
.overflow {
  align-items: flex-end;
  width: 12px;
  height: 25px;
  margin-left: 2px;
  padding-bottom: 3px;
  border-radius: 0 4px 4px 0;
  background: linear-gradient(#b5b5b5, #8f8f8f);
}

/* work area */
.work {
  display: flex;
  flex: 1;
  min-height: 0;
  border-bottom: 1px solid #8a8a8a;
}
.shapes {
  display: flex;
  flex-direction: column;
  width: 180px;
  margin: 5px 8px 7px 7px;
  flex: none;
}
.pane-head {
  display: flex;
  align-items: center;
  justify-content: space-between;
  height: 22px;
  padding: 0 5px 0 6px;
  background: linear-gradient(#fbfbfb, #f3f3f3);
}
.search {
  height: 48px;
  padding-left: 8px;
  background: linear-gradient(#f3f3f3, #fafafa);
}
.search label {
  display: block;
  padding: 6px 0 0 3px;
}
.find-row {
  display: flex;
  height: 18px;
}
.find-row input {
  width: 119px;
  padding-left: 1px;
}
.find-drop {
  box-sizing: border-box;
  width: 17px;
  border: 1px solid #707070;
  background: #eee;
}
.go {
  width: 18px;
  height: 18px;
  margin-left: 9px;
  background: linear-gradient(135deg, #4bb552, #14761d);
}
.stencil {
  box-sizing: border-box;
  height: 18px;
  padding-left: 3px;
  gap: 2px;
  justify-content: flex-start;
  border: solid #b5b5b5;
  border-width: 1px 1px 0 0;
  background: linear-gradient(#fff, #f4f4f4);
  font: 11px/16px "DejaVu Sans Condensed", "DejaVu Sans", sans-serif;
  white-space: nowrap;
  flex: none;
}
.stencil-body {
  display: flex;
  flex: 1;
  min-height: 0;
}
.masters {
  display: grid;
  grid-template-columns: repeat(3, 52px);
  grid-auto-rows: 58px;
  align-content: start;
  flex: 1;
  padding: 5px 3px 0;
  background: linear-gradient(to bottom right, #92e4be, #74c1ab 60%);
  font: 9px/11px "DejaVu Sans Condensed", "DejaVu Sans", sans-serif;
}
.master {
  display: flex;
  flex-direction: column;
  align-items: center;
  text-align: center;
  white-space: pre-line;
}
.master svg {
  filter: drop-shadow(4px 4px 3px rgba(20, 60, 50, 0.6));
}
.master.sel span {
  background: #fff;
}

/* scrollbars */
.vscroll {
  display: flex;
  flex-direction: column;
  width: 16px;
  background: #f0f0f0;
}
.vscroll button {
  height: 17px;
  flex: none;
}
.hscroll {
  display: flex;
  width: 577px;
  border-left: 2px solid #777;
  background: #f0f0f0;
}
.hscroll button {
  width: 16px;
  flex: none;
}
.thumb {
  display: flex;
  align-items: center;
  justify-content: center;
  box-sizing: border-box;
  border: 1px solid #8f8f8f;
  border-radius: 2px;
}
.vscroll .thumb {
  background: linear-gradient(90deg, #f6f6f6, #e6e6e8 45%, #c8c8cc 55%, #d6d6d8);
}
.hscroll .thumb {
  margin: 0 0 2px;
  background: linear-gradient(#f6f6f6, #e6e6e8 45%, #c8c8cc 55%, #d6d6d8);
}
.vscroll .thumb i {
  width: 7px;
  height: 8px;
  background: repeating-linear-gradient(#555 0 1px, transparent 1px 3px);
}
.hscroll .thumb i {
  width: 8px;
  height: 7px;
  background: repeating-linear-gradient(90deg, #555 0 1px, transparent 1px 3px);
}
.side .thumb {
  flex: 1;
}
.main .before {
  flex: 150;
}
.main .thumb {
  flex: 168;
}
.main .after {
  flex: 258;
}
.hscroll .before {
  flex: 172;
}
.hscroll .thumb {
  flex: 181;
}
.hscroll .after {
  flex: 191;
}
.sa {
  border: 4px solid transparent;
}
.sa.up {
  border-bottom-color: #444;
  border-top: 0;
}
.sa.down {
  border-top-color: #444;
  border-bottom: 0;
}
.sa.left {
  border-right-color: #222;
  border-left: 0;
}
.sa.right {
  border-left-color: #222;
  border-right: 0;
}

/* drawing window */
.drawing {
  display: grid;
  grid-template-columns: minmax(0, 1fr) 17px;
  grid-template-rows: minmax(0, 1fr) 18px;
  flex: 1;
  min-width: 0;
  margin-right: 2px;
  border-left: 2px solid #808080;
}
.draw-grid {
  display: grid;
  grid-template-columns: 16px minmax(0, 1fr);
  grid-template-rows: 16px minmax(0, 1fr);
  min-height: 0;
  border-bottom: 1px solid #555;
}
.corner,
.ruler-h,
.ruler-v {
  box-sizing: border-box;
  width: 100%;
  height: 100%;
  background: #fff;
  overflow: hidden;
}
.corner,
.ruler-v {
  border-right: 1px solid #000;
}
.corner,
.ruler-h {
  border-bottom: 1px solid #000;
}
.ruler-h text,
.ruler-v text {
  font: 9px "DejaVu Sans Condensed", "DejaVu Sans", sans-serif;
}
.canvas {
  display: flex;
  position: relative;
  min-height: 0;
  padding: 68px 0 0 29px;
  background: #9199ae;
  overflow: hidden;
}
.page {
  position: relative;
  flex: 1;
  border: solid #000;
  border-width: 1px 0 0 1px;
  background:
    repeating-linear-gradient(90deg, transparent 0 11px, #c0c0c0 11px 12px),
    repeating-linear-gradient(#fff 0 11px, #c0c0c0 11px 12px);
}
.links {
  position: absolute;
  inset: 0;
  z-index: 1;
  width: 100%;
  height: 100%;
}
.links path {
  fill: none;
  stroke: #2f6fc8;
  stroke-width: 1px;
  shape-rendering: crispEdges;
}
.node {
  position: absolute;
  box-sizing: border-box;
  display: flex;
  flex-direction: column;
  align-items: center;
  justify-content: center;
  border: 1px solid #000;
  border-radius: 12px;
  background: #fff;
  color: #222;
  font: 14px/17px "Liberation Sans", Arial, sans-serif;
  white-space: nowrap;
}
.node::before {
  content: "";
  position: absolute;
  inset: 2px;
  border: 1px solid #333;
  border-radius: 9px;
}
.node span {
  min-height: 17px;
}
.boss {
  box-shadow: 12px 12px 0 #cdcdcd;
}
.pin {
  position: absolute;
  z-index: 2;
  width: 7px;
  height: 7px;
}
.pin path {
  stroke: #2222ee;
  stroke-dasharray: 1 1;
  stroke-width: 2;
}
.pin.t {
  top: -4px;
  left: calc(50% - 4px);
}
.pin.b {
  bottom: -4px;
  left: calc(50% - 4px);
}
.pin.l {
  left: -4px;
  top: calc(50% - 4px);
}
.pin.r {
  right: -4px;
  top: calc(50% - 4px);
}

/* floating toolbar */
.float {
  position: absolute;
  z-index: 3;
  left: 341px;
  top: 37px;
  width: 152px;
  border: 5px solid #858585;
  background: #fff;
}
.float-head {
  display: flex;
  align-items: center;
  height: 17px;
  margin: 1px 1px 0;
  padding: 0 4px 0 2px;
  gap: 6px;
  background: #9d9d9d;
  color: #2b2b2b;
}
.float-head span {
  flex: 1;
  min-width: 0;
  overflow: hidden;
  white-space: nowrap;
  font-size: 12px;
}
.float-body {
  display: flex;
  align-items: center;
  height: 23px;
  margin: 0 1px 1px 0;
  background: linear-gradient(#fdfdfd, #f0f0f0);
}

/* page tabs */
.bottom {
  display: flex;
  justify-content: space-between;
  min-width: 0;
}
.pages {
  display: flex;
  align-items: flex-start;
}
.nav {
  width: 17px;
  height: 16px;
}
.tab {
  position: relative;
}
.tab b {
  position: absolute;
  font: bold 12px/16px "DejaVu Sans Condensed", "DejaVu Sans", sans-serif;
}
.resize {
  width: 17px;
  height: 18px;
}

/* status bar */
.status {
  display: flex;
  align-items: center;
  gap: 5px;
  height: 22px;
  padding: 0 21px 0 3px;
  background: #f0eceb;
  flex: none;
}
.status .cell {
  box-sizing: border-box;
  width: 180px;
  height: 18px;
  border: 1px solid #f8f6f5;
}
.status .last {
  width: 120px;
  margin-left: auto;
  text-align: center;
}

/* taskbar */
.taskbar {
  box-sizing: border-box;
  display: flex;
  height: 40px;
  border-top: 1px solid #2c3846;
  background: linear-gradient(90deg, #869cb6 50px, #afcceb 64px, #afcceb 68%, #879db6 73%);
  flex: none;
}
.start {
  width: 54px;
  margin-right: 6px;
}
.task {
  box-sizing: border-box;
  width: 60px;
  margin-right: 2px;
}
.task.open {
  border: 1px solid #4f6378;
  border-radius: 3px;
  background: linear-gradient(135deg, #dce9f6, #b8d1ea 60%, #c5daef);
  box-shadow: inset 0 0 0 1px #e6f0f9;
}
.task.active {
  background: linear-gradient(135deg, #f6faff, #cfe0f2 60%, #e5eef8);
}
.task.stack {
  width: 51px;
  margin-right: 10px;
  box-shadow: inset 0 0 0 1px #e6f0f9, 3px 0 0 #b4cde6, 4px 0 0 #5c7188, 7px 0 0 #b4cde6, 8px 0 0 #5c7188;
}
.tray {
  display: flex;
  align-items: center;
  gap: 8px;
  margin-left: auto;
  color: #fff;
}
.clock {
  display: flex;
  flex-direction: column;
  align-items: center;
  width: 76px;
  line-height: 17px;
}
.peek {
  width: 14px;
  height: 39px;
  margin-left: -7px;
  border-left: 1px solid #4d5f75;
  background: linear-gradient(135deg, #a5b8cd, #7d93ad);
}
</style>
